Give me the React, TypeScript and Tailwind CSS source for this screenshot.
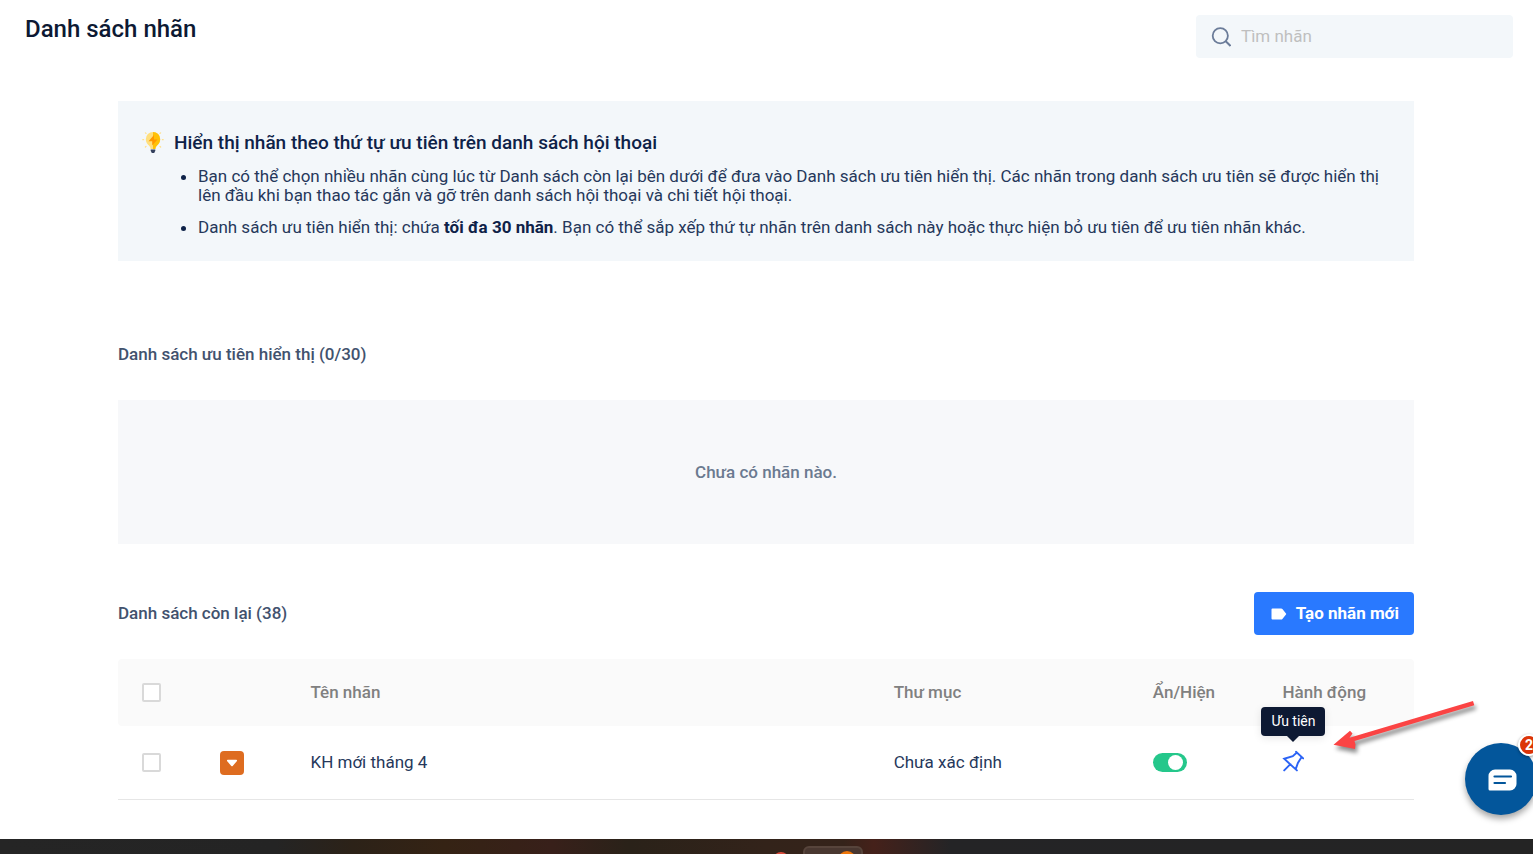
import { useState } from "react";

function BulbIcon() {
  return (
    <svg viewBox="0 1 22 22" className="h-[22px] w-[22px]" aria-hidden="true">
      <g stroke="#ffe08a" strokeWidth="1.2" strokeLinecap="round">
        <path d="M.8 8.700h.8M20.400 8.700h.8M3.400 1.800l.6.6M18.600 1.800l-.6.6M3.400 16l.6-.6M18.600 16l-.6-.6" />
      </g>
      <path d="M11 1a7.2 7.2 0 0 0-7.2 7.2c0 3 1.6 4.700 2.900 6.100.9 1 1.700 1.900 1.900 3.700h4.800c.2-1.800 1-2.700 1.900-3.700 1.300-1.400 2.900-3.100 2.900-6.100A7.200 7.200 0 0 0 11 1z" fill="#ffdf7d" />
      <path d="M11 1a7.200 7.200 0 0 1 7.200 7.200c0 3-1.600 4.700-2.900 6.100-.9 1-1.700 1.900-1.900 3.700H11z" fill="#ffc107" />
      <path d="M12 4 6.500 10.300h3.700V14.500l5.300-6.100h-3.500z" fill="#ff9800" />
      <path d="M8.700 18.600h4.600v1.200l-1.100 2.100H9.800l-1.100-2.100z" fill="#33405c" />
    </svg>
  );
}

function SearchIcon() {
  return (
    <svg viewBox="0 0 20 20" className="h-5 w-5" fill="none" stroke="#6b7c99" strokeWidth="1.800" aria-hidden="true">
      <circle cx="9.300" cy="8.700" r="7.600" />
      <path d="m14.500 14 5 5" strokeWidth="2" />
    </svg>
  );
}

function PinIcon() {
  return (
    <svg viewBox="0 0 22 22" className="h-[22px] w-[22px]" fill="none" stroke="#2b63f5" strokeWidth="1.900" strokeLinecap="round" aria-hidden="true">
      <path d="m14 1.800 7.200 6.600M14.600 2.800 10.800 6.200 2.200 8.800l12.700 11.600M19.300 7.600l-3.400 5.400-2 5.600M8.400 14.200l-6.200 6.200" />
    </svg>
  );
}

function Arrow() {
  return (
    <svg
      viewBox="0 0 150 60"
      className="pointer-events-none absolute top-[-51px] right-[-90px] h-[60px] w-[150px] overflow-visible drop-shadow-[2px_4px_2px_rgba(0,0,0,0.45)]"
      aria-hidden="true"
    >
      <path d="M143 2 144.300 6.300 24.500 42 25.500 45.500 25 50 3.500 45.700 20 31.700 22.500 34.500 19.500 38.800z" fill="#fb4444" />
    </svg>
  );
}

function ChatButton() {
  return (
    <div className="absolute right-[-4px] bottom-[39px]">
      <button
        type="button"
        aria-label="Chat"
        className="flex h-[72px] w-[72px] items-center justify-center rounded-full bg-[#03569b] pl-0.5 pt-0.5 shadow-[0_4px_6px_rgba(0,0,0,0.35)]"
      >
        <svg viewBox="0 0 29 22" className="h-[22px] w-[29px]" aria-hidden="true">
          <path d="M7 .5h15a6.500 6.500 0 0 1 6.500 6.500v8a6.500 6.500 0 0 1-6.500 6.500H2A1.500 1.500 0 0 1 .5 20V7A6.500 6.500 0 0 1 7 .5z" fill="#fff" />
          <path d="M6.500 7.500h16.500M6.500 14h10.500" stroke="#03569b" strokeWidth="2.200" strokeLinecap="round" />
        </svg>
      </button>
      <span className="absolute top-[-9px] left-[53px] flex h-[22px] w-[22px] items-center justify-center rounded-full border-2 border-white bg-[#dc3408] text-[14px] leading-none font-bold text-white shadow-[0_1px_3px_rgba(0,0,0,0.4)]">
        2
      </span>
    </div>
  );
}

function Tick({ label }: { label: string }) {
  return (
    <input
      type="checkbox"
      aria-label={label}
      className="block h-[19px] w-[19px] appearance-none rounded-xs border-2 border-[#d9d9d9] bg-white checked:bg-[#2979ff]"
    />
  );
}

function Toggle() {
  const [on, setOn] = useState(true);
  return (
    <button
      type="button"
      role="switch"
      aria-checked={on}
      aria-label="Ẩn/Hiện"
      onClick={() => setOn(!on)}
      className={
        on
          ? "flex h-[19px] w-[34px] items-center justify-end rounded-full bg-[#25c78b] px-1"
          : "flex h-[19px] w-[34px] items-center justify-start rounded-full bg-gray-300 px-1"
      }
    >
      <span className="h-[15px] w-[15px] rounded-full bg-white" />
    </button>
  );
}

function LabelTable() {
  return (
    <table className="mt-6 w-full table-fixed border-separate border-spacing-0 text-left">
      <colgroup>
        <col className="w-[6%]" />
        <col className="w-[7%]" />
        <col className="w-[45%]" />
        <col className="w-[20%]" />
        <col className="w-[10%]" />
        <col className="w-[12%]" />
      </colgroup>
      <thead className="bg-[#fafafa] text-[#808080]">
        <tr className="h-[67px]">
          <th className="rounded-l px-6"><Tick label="Chọn tất cả" /></th>
          <th className="px-6" />
          <th className="px-6 font-medium">Tên nhãn</th>
          <th className="px-6 font-medium">Thư mục</th>
          <th className="pl-6 font-medium">Ẩn/Hiện</th>
          <th className="rounded-r pl-6 font-medium">Hành động</th>
        </tr>
      </thead>
      <tbody className="text-[#26385b]">
        <tr className="h-[74px]">
          <td className="border-b border-[#e6e6e6] px-6"><Tick label="KH mới tháng 4" /></td>
          <td className="border-b border-[#e6e6e6] px-6">
            <span className="flex h-6 w-6 items-center justify-center rounded bg-[#de6c20]">
              <svg viewBox="0 0 12 8" className="h-2 w-3" fill="#fff" aria-hidden="true">
                <path d="M1.800.8h8.400c.8 0 1.200.8.6 1.400L6.700 6.900a1 1 0 0 1-1.400 0L1.200 2.200C.6 1.600 1 .8 1.800.8z" />
              </svg>
            </span>
          </td>
          <td className="border-b border-[#e6e6e6] px-6">KH mới tháng 4</td>
          <td className="border-b border-[#e6e6e6] px-6">Chưa xác định</td>
          <td className="border-b border-[#e6e6e6] px-6"><Toggle /></td>
          <td className="border-b border-[#e6e6e6] px-6">
            <div className="relative">
              <button type="button" aria-label="Ưu tiên" className="relative block pb-1">
                <PinIcon />
                <span
                  role="tooltip"
                  className="absolute bottom-full left-1/2 mb-3.5 flex h-[29px] w-16 -translate-x-1/2 items-center justify-center rounded bg-[#0d1933] text-[14px] text-white shadow-[0_2px_8px_rgba(0,0,0,0.1)]"
                >
                  Ưu tiên
                  <svg viewBox="0 0 12 6" className="absolute top-full h-1.5 w-3" aria-hidden="true">
                    <path d="M0 0h12L6 6z" fill="#0d1933" />
                  </svg>
                </span>
              </button>
              <Arrow />
            </div>
          </td>
        </tr>
      </tbody>
    </table>
  );
}

export default function App() {
  return (
    <div className="relative flex min-h-screen flex-col overflow-hidden bg-white font-['Roboto','Open_Sans',sans-serif] text-[17px] leading-[19px] text-[#0e2248]">
      <header className="flex items-start justify-between pt-[15px] pr-5 pl-[25px]">
        <h1 className="text-2xl leading-7 font-medium text-[#0d1933]">Danh sách nhãn</h1>
        <label className="flex h-[43px] w-[317px] items-center gap-2.5 rounded bg-[#f3f7fa] px-[15px]">
          <SearchIcon />
          <input
            type="text"
            aria-label="Tìm nhãn"
            placeholder="Tìm nhãn"
            className="min-w-0 flex-1 bg-transparent outline-none placeholder:text-[#bfbfbf]"
          />
        </label>
      </header>

      <main className="pt-[43px] pr-[119px] pb-[39px] pl-[118px]">
        <section className="h-40 bg-[#f3f7fa] px-6 pt-[30px]">
          <div className="flex items-center gap-2.5">
            <BulbIcon />
            <h2 className="text-[19px] leading-6 font-medium">Hiển thị nhãn theo thứ tự ưu tiên trên danh sách hội thoại</h2>
          </div>
          <ul className="mt-3 list-disc space-y-[13px] pl-14 text-[#26385b] marker:text-[#0e2248]">
            <li>
              Bạn có thể chọn nhiều nhãn cùng lúc từ Danh sách còn lại bên dưới để đưa vào Danh sách ưu tiên hiển thị. Các
              nhãn trong danh sách ưu tiên sẽ được hiển thị lên đầu khi bạn thao tác gắn và gỡ trên danh sách hội thoại và
              chi tiết hội thoại.
            </li>
            <li>
              Danh sách ưu tiên hiển thị: chứa <strong className="font-bold text-[#0e2248]">tối đa 30 nhãn</strong>. Bạn có
              thể sắp xếp thứ tự nhãn trên danh sách này hoặc thực hiện bỏ ưu tiên để ưu tiên nhãn khác.
            </li>
          </ul>
        </section>

        <h3 className="mt-21 font-medium text-[#42526e]">Danh sách ưu tiên hiển thị (0/30)</h3>
        <div className="mt-9 flex h-36 items-center justify-center bg-[#f7f8fa] font-medium text-[#6b7a90]">
          Chưa có nhãn nào.
        </div>

        <div className="mt-12 flex items-center justify-between">
          <h3 className="font-medium text-[#42526e]">Danh sách còn lại (38)</h3>
          <button
            type="button"
            className="flex h-[43px] w-40 items-center justify-between rounded bg-[#2979ff] pr-[15px] pl-[17px] font-bold text-white"
          >
            <svg viewBox="0 0 16 12" className="h-3 w-4" fill="#fff" aria-hidden="true">
              <path d="M1.500.5h8.700c.5 0 .9.200 1.200.6L15 5.400a1 1 0 0 1 0 1.200l-3.600 4.300c-.3.400-.7.600-1.200.6H1.500a1 1 0 0 1-1-1v-9a1 1 0 0 1 1-1z" />
            </svg>
            Tạo nhãn mới
          </button>
        </div>

        <LabelTable />
      </main>

      <footer className="relative mt-auto h-[15px] shrink-0 overflow-hidden bg-[#222222] bg-[linear-gradient(90deg,#252525_0%,#242424_18%,#2c2218_23%,#352314_29%,#38201a_36%,#2a2219_41%,#33231a_50%,#35231a_55%,#45211a_57%,#242426_62%,#242424_100%)]">
        <span className="absolute top-[7px] left-[803px] h-6 w-[60px] rounded-md border-2 border-[#57443b] bg-[#493730]" />
        <span className="absolute top-[13px] left-[773px] h-4 w-4 rounded-full bg-[#d94b3b]" />
        <span className="absolute top-3 left-[838px] h-5 w-[18px] rounded-full bg-[#ef7609]" />
      </footer>

      <ChatButton />
    </div>
  );
}
